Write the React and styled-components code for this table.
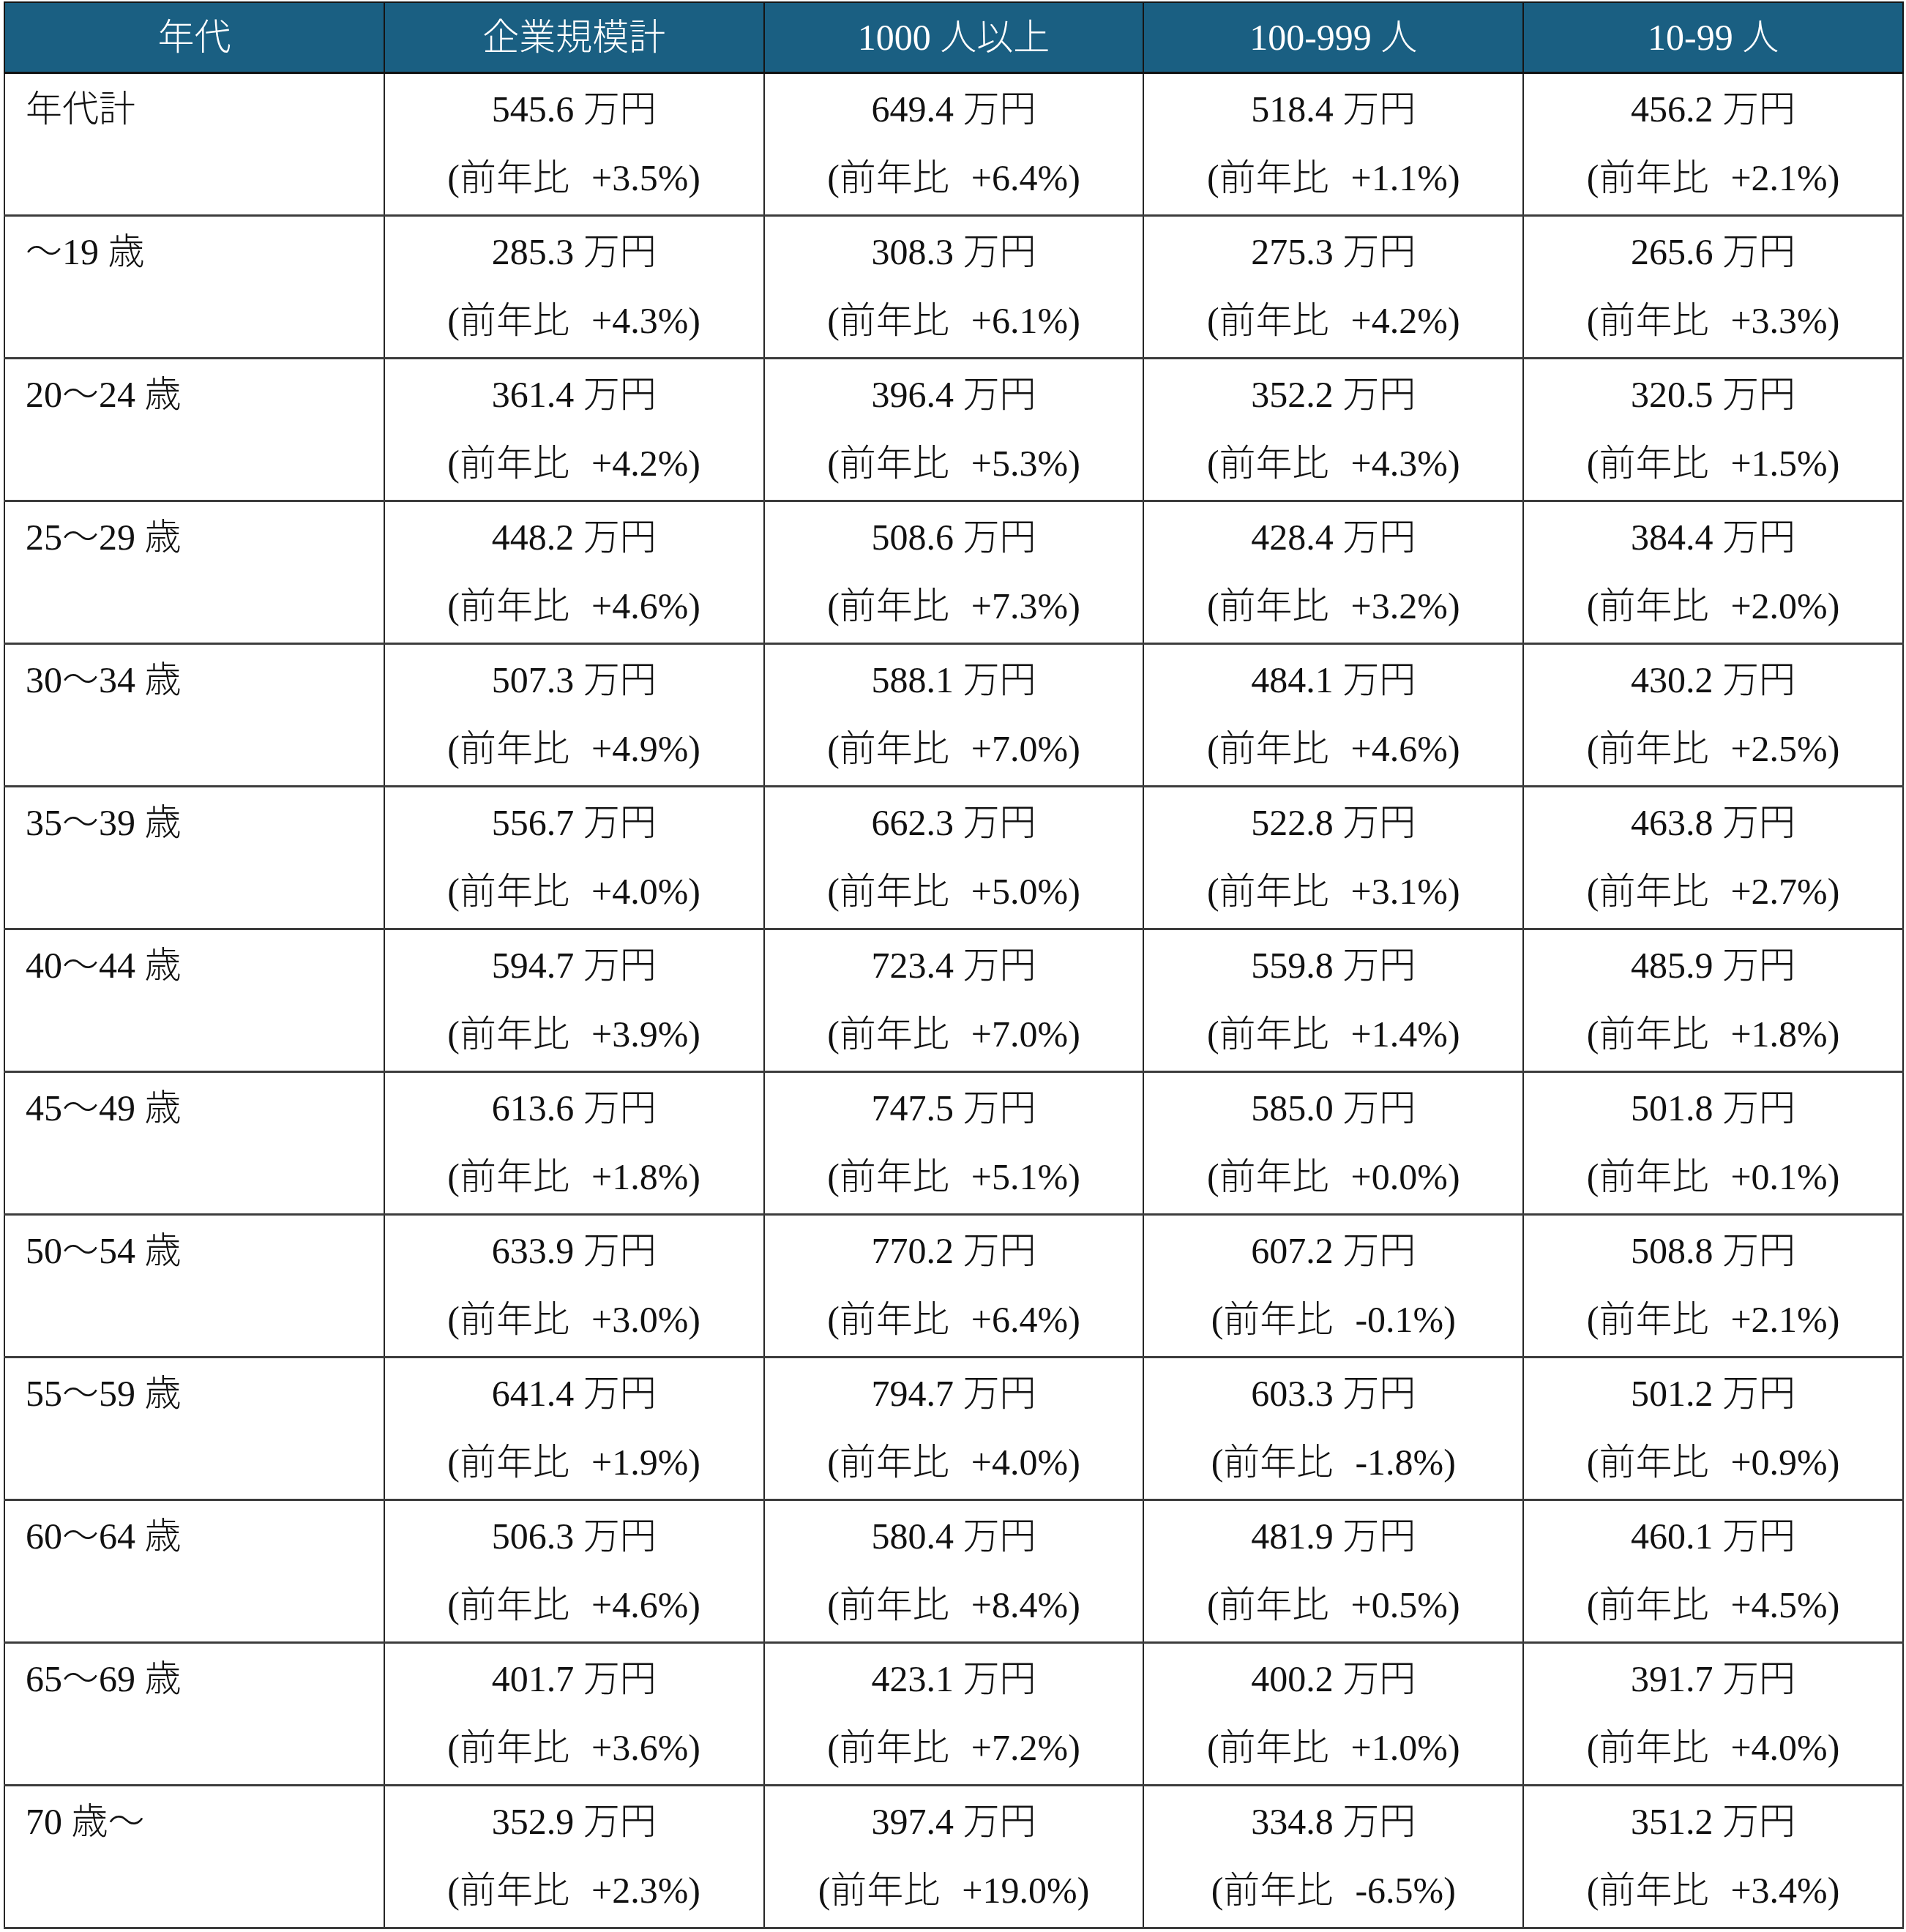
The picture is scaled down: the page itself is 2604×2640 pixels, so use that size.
import React from 'react';
import styled, { createGlobalStyle } from 'styled-components';

const GlobalStyle = createGlobalStyle`
  html, body {
    margin: 0;
    padding: 0;
    background: #ffffff;
  }
  body {
    font-family: "Liberation Serif", "Noto Sans CJK JP", serif;
  }
`;

const columns = ['年代', '企業規模計', '1000 人以上', '100-999 人', '10-99 人'];

const rows = [
  { age: '年代計', cells: [['545.6', '+3.5'], ['649.4', '+6.4'], ['518.4', '+1.1'], ['456.2', '+2.1']] },
  { age: '～19 歳', cells: [['285.3', '+4.3'], ['308.3', '+6.1'], ['275.3', '+4.2'], ['265.6', '+3.3']] },
  { age: '20～24 歳', cells: [['361.4', '+4.2'], ['396.4', '+5.3'], ['352.2', '+4.3'], ['320.5', '+1.5']] },
  { age: '25～29 歳', cells: [['448.2', '+4.6'], ['508.6', '+7.3'], ['428.4', '+3.2'], ['384.4', '+2.0']] },
  { age: '30～34 歳', cells: [['507.3', '+4.9'], ['588.1', '+7.0'], ['484.1', '+4.6'], ['430.2', '+2.5']] },
  { age: '35～39 歳', cells: [['556.7', '+4.0'], ['662.3', '+5.0'], ['522.8', '+3.1'], ['463.8', '+2.7']] },
  { age: '40～44 歳', cells: [['594.7', '+3.9'], ['723.4', '+7.0'], ['559.8', '+1.4'], ['485.9', '+1.8']] },
  { age: '45～49 歳', cells: [['613.6', '+1.8'], ['747.5', '+5.1'], ['585.0', '+0.0'], ['501.8', '+0.1']] },
  { age: '50～54 歳', cells: [['633.9', '+3.0'], ['770.2', '+6.4'], ['607.2', '-0.1'], ['508.8', '+2.1']] },
  { age: '55～59 歳', cells: [['641.4', '+1.9'], ['794.7', '+4.0'], ['603.3', '-1.8'], ['501.2', '+0.9']] },
  { age: '60～64 歳', cells: [['506.3', '+4.6'], ['580.4', '+8.4'], ['481.9', '+0.5'], ['460.1', '+4.5']] },
  { age: '65～69 歳', cells: [['401.7', '+3.6'], ['423.1', '+7.2'], ['400.2', '+1.0'], ['391.7', '+4.0']] },
  { age: '70 歳～', cells: [['352.9', '+2.3'], ['397.4', '+19.0'], ['334.8', '-6.5'], ['351.2', '+3.4']] },
];

const App = () => (
  <>
    <GlobalStyle />
    <Page>
      <Table>
        <thead>
          <tr>
            {columns.map((c) => (
              <HeadCell key={c}>
                <HeadLabel>{c}</HeadLabel>
              </HeadCell>
            ))}
          </tr>
        </thead>
        <tbody>
          {rows.map((r) => (
            <tr key={r.age}>
              <AgeCell>
                <Line>{r.age}</Line>
              </AgeCell>
              {r.cells.map(([amount, change], i) => (
                <ValueCell key={i}>
                  <Line>{amount} 万円</Line>
                  <ChangeLine>(前年比 {change}%)</ChangeLine>
                </ValueCell>
              ))}
            </tr>
          ))}
        </tbody>
      </Table>
    </Page>
  </>
);

const Page = styled.div`
  padding: 2px 0 0 5px;
`;

const Table = styled.table`
  width: 2596px;
  border-collapse: collapse;
  table-layout: fixed;
  font-size: 50px;
  font-weight: 300;
  color: #111111;
  border: 2px solid #2b2b2b;
`;

const HeadCell = styled.th`
  background: #1a5f82;
  color: #ffffff;
  font-weight: 300;
  padding: 0;
  border: 2px solid #151515;
  border-bottom: 3px solid #111111;
  text-align: center;
  vertical-align: middle;
`;

const HeadLabel = styled.div`
  height: 94px;
  line-height: 94px;
  white-space: nowrap;
`;

const BodyCell = styled.td`
  padding: 1px 0 3px;
  vertical-align: top;
  border-left: 2px solid #262626;
  border-right: 2px solid #262626;
  border-bottom: 3px solid #3c3c3c;
  white-space: nowrap;
`;

const AgeCell = styled(BodyCell)`
  text-align: left;
  padding-left: 28px;
`;

const ValueCell = styled(BodyCell)`
  text-align: center;
`;

const Line = styled.div`
  height: 94px;
  line-height: 94px;
`;

const ChangeLine = styled(Line)`
  word-spacing: 0.35em;
`;

export default App;
